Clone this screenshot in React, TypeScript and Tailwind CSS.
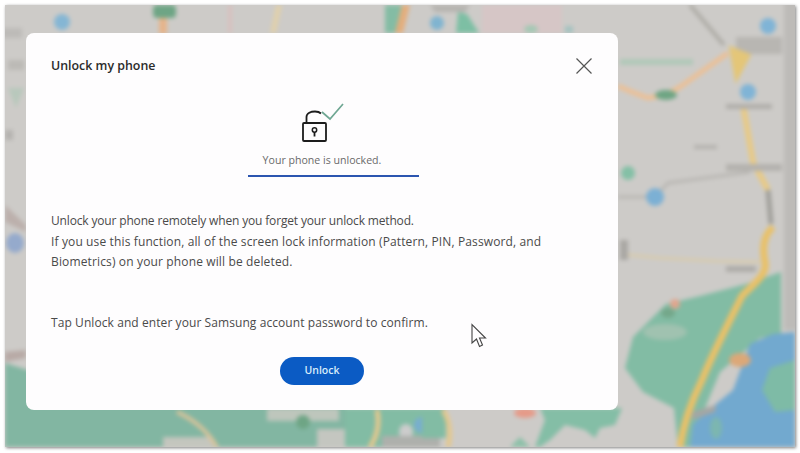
import React from 'react';

// blurred map behind the dialog, drawn in page coordinates
const MapBackdrop = () => (
  <svg className="absolute inset-0 w-full h-full" viewBox="5 5 790 442" preserveAspectRatio="none">
    <g style={{ filter: 'blur(2px)' }}>
      <rect x="0" y="0" width="800" height="453" fill="#cdcbc8" />

      {/* left edge */}
      <rect x="0" y="28" width="22" height="10" fill="#bdbbb8" />
      <rect x="8" y="60" width="16" height="10" fill="#bcbab6" />
      <path d="M8 88 L24 88 L16 108 Z" fill="#b8c8bc" />
      <rect x="5" y="130" width="8" height="10" fill="#b5b3b0" />
      <path d="M5 205 L26 225 L26 232 L5 222 Z" fill="#bcb0ac" />
      <ellipse cx="15" cy="243" rx="9" ry="10" fill="#95aacc" />
      <path d="M5 352 L26 350 L26 358 L5 362 Z" fill="#b8aaa6" />

      {/* top edge */}
      <circle cx="62" cy="22" r="8" fill="#85b6d4" />
      <rect x="153" y="5" width="23" height="13" rx="4" fill="#6ea585" />
      <rect x="159" y="18" width="8" height="16" fill="#e6b48a" />
      <rect x="228" y="5" width="4" height="28" fill="#d9c0bf" />
      <path d="M282 5 L276 33 L270 33 L276 5 Z" fill="#e0d0ac" />
      <path d="M385 5 L402 5 L396 33 L385 33 Z" fill="#84bca4" />
      <path d="M410 5 L403 33 L395 33 L402 5 Z" fill="#e4ae7c" />
      <path d="M430 5 L470 5 L465 12 L435 12 Z" fill="#b6b4b0" />
      <circle cx="437" cy="23" r="7" fill="#80b4d0" />
      <path d="M458 12 L467 14 L479 33 L456 33 Z" fill="#7dbfa4" />
      <rect x="482" y="5" width="80" height="28" fill="#d6c6c6" />
      <ellipse cx="531" cy="29" rx="7" ry="4" fill="#a4c8b4" />
      <rect x="565" y="26" width="8" height="7" fill="#a4c2c0" />

      {/* right side, upper */}
      <path d="M690 5 L724 45" fill="none" stroke="#aeaca6" strokeWidth="4" />
      <rect x="736" y="37" width="46" height="17" fill="#b8b6b2" />
      <path d="M618 86 L632 92 L648 98 L666 95 L680 87 L728 53" fill="none" stroke="#ecc096" strokeWidth="5" />
      <ellipse cx="666" cy="95" rx="11" ry="5" fill="#6ea583" />
      <path d="M730 47 L750 55 L736 81 Z" fill="#e4c678" stroke="#e4c678" strokeWidth="2" />
      <path d="M743 105 L753 162 L768 190" fill="none" stroke="#e8ca86" strokeWidth="6" />
      <path d="M768 190 L771 224" fill="none" stroke="#9f9e99" strokeWidth="5" />
      <rect x="620" y="59" width="73" height="6" fill="#b0c8b8" />
      <rect x="726" y="104" width="46" height="5" fill="#b0aeaa" />
      <rect x="694" y="145" width="23" height="4" fill="#b4b2ae" />
      <rect x="726" y="164" width="56" height="7" fill="#b4b2ae" />
      <path d="M618 197 L655 197 L668 183 L750 172" fill="none" stroke="#b8b6b2" strokeWidth="3" />
      <circle cx="768" cy="26" r="8" fill="#80b4d6" />
      <circle cx="748" cy="92" r="8" fill="#80b4d6" />
      <circle cx="655" cy="197" r="9" fill="#7cb0d4" />
      <circle cx="628" cy="173" r="7" fill="#84c0a6" />

      {/* right side, lower: park and lake */}
      <path d="M620 254 L660 258 L716 261 L760 262" fill="none" stroke="#dacba8" strokeWidth="2.5" />
      <rect x="726" y="266" width="30" height="6" fill="#aeaca8" />
      <path d="M781 272 L781 335 L760 338 L720 372 L700 420 L690 447 L678 447 L674 408 L643 392 L625 368 L633 337 L666 304 L700 296 L746 284 Z" fill="#82bca4" />
      <path d="M690 447 L693 424 L716 404 L733 390 L750 344 L773 334 L795 332 L795 447 Z" fill="#72a9cf" />
      <path d="M770 368 L795 360 L795 410 L775 412 L762 390 Z" fill="#7ebba6" />
      <ellipse cx="716" cy="428" rx="6" ry="11" fill="#7cb6b0" />
      <path d="M680 447 C684 420 692 400 702 380 C712 355 730 320 742 296 C752 285 768 275 765 262 C762 248 764 235 773 227" fill="none" stroke="#e9c168" strokeWidth="7" />
      <ellipse cx="740" cy="360" rx="11" ry="7" fill="#dca878" />
      <path d="M692 412 L716 405 L715 412 L692 420 Z" fill="#a4a6a4" />
      <ellipse cx="668" cy="313" rx="7" ry="5" fill="#74a78a" />
      <circle cx="675" cy="304" r="5" fill="#e0a68e" />
      <ellipse cx="665" cy="332" rx="22" ry="8" fill="#a0c2b0" />

      {/* bottom strip */}
      <path d="M5 363 L60 380 L60 447 L5 447 Z" fill="#82b6a2" />
      <rect x="30" y="400" width="315" height="47" fill="#82b6a2" />
      <rect x="163" y="437" width="50" height="10" fill="#c4c6be" />
      <path d="M177 412 C195 420 208 432 217 447" fill="none" stroke="#dcc49a" strokeWidth="4" />
      <rect x="267" y="408" width="72" height="13" fill="#bec6bc" />
      <circle cx="303" cy="422" r="7" fill="#6ea585" />
      <rect x="317" y="429" width="36" height="18" fill="#c4c6c0" />
      <rect x="345" y="408" width="77" height="39" fill="#82bca4" />
      <path d="M377 410 C380 425 376 438 370 447" fill="none" stroke="#e4c88e" strokeWidth="5" />
      <ellipse cx="406" cy="432" rx="7" ry="8" fill="#cccccc" />
      <circle cx="422" cy="425" r="8" fill="#78aed0" />
      <rect x="382" y="436" width="58" height="11" fill="#aeb0ac" />
      <rect x="422" y="408" width="24" height="30" fill="#82bca4" />
      <path d="M443 410 C450 420 451 435 448 447" fill="none" stroke="#e4c88e" strokeWidth="5" />
      <ellipse cx="525" cy="413" rx="11" ry="5" fill="#e69a88" />
      <path d="M510 447 L520 437 L530 447 Z" fill="#8cc0a8" />
      <path d="M535 447 L545 420 L540 408 L622 408 L615 425 L600 428 L595 438 L585 430 L565 425 L550 440 L540 447 Z" fill="#84bea6" />
      <rect x="620" y="240" width="8" height="20" fill="#aaa8a4" />
      <rect x="784" y="0" width="16" height="330" fill="#bdbbb8" />
    </g>
  </svg>
);

export default function App() {
  return (
    <div className="w-[800px] h-[453px] bg-white pl-[5px] pt-[5px] pr-[5px] pb-[6px] overflow-hidden font-['Open_Sans','Noto_Sans',sans-serif]">
      <div className="relative w-full h-full overflow-hidden shadow-[1px_1px_3px_rgba(0,0,0,0.5)]">
        <MapBackdrop />

        {/* Dialog */}
        <div className="absolute left-[21px] top-[28px] w-[592px] h-[377px] bg-[#fefdfe] rounded-lg flex flex-col">
          <div className="flex items-center justify-between pl-[25px] pr-[26px] pt-[23px]">
            <h2 className="text-[12.4px] leading-[20px] font-semibold text-[#2b2b2b]">Unlock my phone</h2>
            <svg width="16" height="16" viewBox="0 0 16 16" fill="none" stroke="#555555" strokeWidth="1.2">
              <path d="M0.5 0.5 L15.5 15.5 M15.5 0.5 L0.5 15.5" />
            </svg>
          </div>

          <div className="flex flex-col items-center mt-[27px]">
            <svg width="44" height="40" viewBox="0 0 44 40" fill="none" className="ml-[2px]">
              <path d="M5.5 20 V14 C5.5 10 10 8.5 14 8.5 C16.5 8.5 18.5 9 20 10.5" stroke="#1c1c1c" strokeWidth="1.8" />
              <rect x="2" y="20" width="23" height="18" rx="1" stroke="#1c1c1c" strokeWidth="1.8" />
              <circle cx="13.5" cy="27" r="2.2" stroke="#1c1c1c" strokeWidth="1.5" />
              <path d="M13.5 29 V33.5" stroke="#1c1c1c" strokeWidth="1.8" />
              <path d="M21 9 L29 16 L42 1" stroke="#6fa793" strokeWidth="1.7" />
            </svg>
            <p className="text-[10.6px] leading-[14px] mt-[10px] text-[#6a6a6a]">Your phone is unlocked.</p>
            <div className="w-[171px] h-[2px] mt-[8px] ml-[23px] bg-[#2c55b0]" />
          </div>

          <div className="pl-[25px] mt-[34px] text-[12px] leading-[20.5px] text-[#4a4a4a]">
            <p className="tracking-[-0.16px]">Unlock your phone remotely when you forget your unlock method.</p>
            <p className="tracking-[0.13px]">If you use this function, all of the screen lock information (Pattern, PIN, Password, and</p>
            <p className="tracking-[0.14px]">Biometrics) on your phone will be deleted.</p>
            <p className="mt-[40px] tracking-[0.08px]">Tap Unlock and enter your Samsung account password to confirm.</p>
          </div>

          <div className="flex justify-center mt-[24px]">
            <button className="w-[84px] h-[28px] rounded-full bg-[#0b5bc4] text-[10.5px] font-semibold text-[#d8ecfb]">Unlock</button>
          </div>

          {/* Mouse pointer */}
          <svg className="absolute left-[444px] top-[290px]" width="18" height="26" viewBox="0 0 18 26" fill="none">
            <path d="M2 1.5 V20 L6.5 16 L9.5 23.5 L12.5 22 L9.5 15 L15.5 15 Z" fill="#fefdfe" stroke="#444444" strokeWidth="1.1" />
          </svg>
        </div>
      </div>
    </div>
  );
}
